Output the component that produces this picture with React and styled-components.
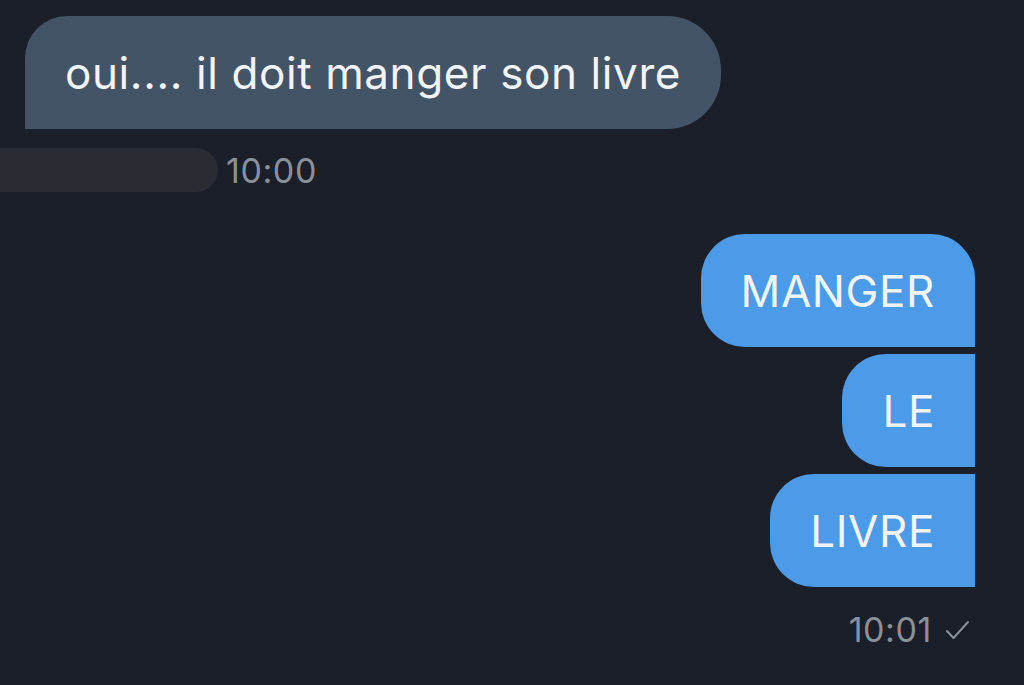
import React from "react";
import styled, { createGlobalStyle } from "styled-components";

const Global = createGlobalStyle`
  html, body { margin: 0; padding: 0; background: #1a1f29; }
  body { font-family: Inter, "Noto Sans", sans-serif; }
`;

const Page = styled.div`
  width: 1024px;
  height: 685px;
  background: #1a1f29;
  display: flex;
  flex-direction: column;
  overflow: hidden;
`;

const ReceivedRow = styled.div`
  display: flex;
  padding: 16px 0 0 25px;
`;

const Bubble = styled.div`
  height: 113px;
  box-sizing: border-box;
  display: flex;
  align-items: center;
  padding: 0 40px;
  font-size: 44px;
  letter-spacing: 0.6px;
  color: #f2f4f7;
  white-space: nowrap;
`;

const Received = styled(Bubble)`
  background: #435466;
  border-radius: 42px 54px 54px 0;
`;

const MetaRow = styled.div`
  display: flex;
  align-items: center;
  gap: 8px;
  margin-top: 19px;
  height: 44px;
`;

const Bar = styled.div`
  width: 218px;
  height: 44px;
  background: #292c32;
  border-radius: 0 22px 22px 0;
`;

const Time = styled.span`
  font-size: 34px;
  letter-spacing: 0.6px;
  color: #8b919a;
`;

const SentGroup = styled.div`
  display: flex;
  flex-direction: column;
  align-items: flex-end;
  gap: 7px;
  padding-right: 49px;
  margin-top: 42px;
`;

const Sent = styled(Bubble)`
  background: #4b9be8;
  border-radius: ${(p) => (p.$first ? "44px 44px 0 44px" : "44px 0 0 44px")};
`;

const SentMeta = styled.div`
  display: flex;
  justify-content: flex-end;
  align-items: center;
  gap: 13px;
  padding-right: 54px;
  margin-top: 22px;
`;

const Check = () => (
  <svg width="25" height="22" viewBox="0 0 25 22" fill="none">
    <path d="M2 12 L8.5 19 L23 3" stroke="#8b919a" strokeWidth="2" strokeLinecap="round" strokeLinejoin="round" />
  </svg>
);

export default function App() {
  return (
    <Page>
      <Global />
      <ReceivedRow>
        <Received>oui.... il doit manger son livre</Received>
      </ReceivedRow>
      <MetaRow>
        <Bar />
        <Time>10:00</Time>
      </MetaRow>
      <SentGroup>
        <Sent $first>MANGER</Sent>
        <Sent>LE</Sent>
        <Sent>LIVRE</Sent>
      </SentGroup>
      <SentMeta>
        <Time>10:01</Time>
        <Check />
      </SentMeta>
    </Page>
  );
}
